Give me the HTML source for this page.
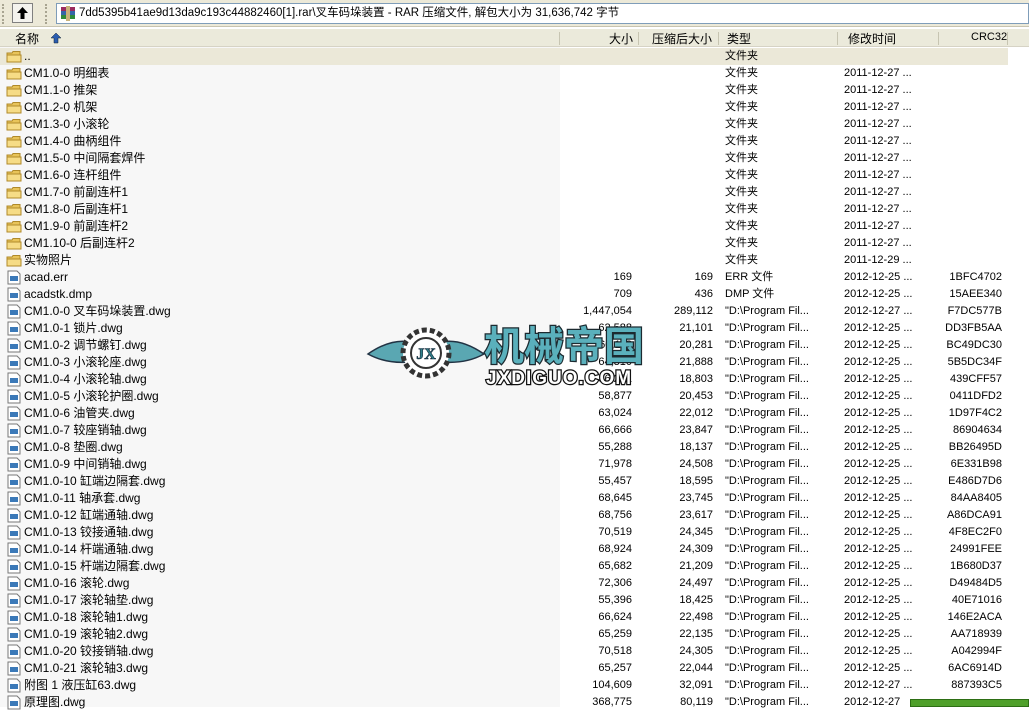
<!DOCTYPE html>
<html><head><meta charset="utf-8"><style>
*{margin:0;padding:0;box-sizing:border-box}
body{width:1029px;height:707px;overflow:hidden;background:#fff;position:relative;font:12px "Liberation Sans","WenQuanYi Zen Hei","Noto Sans CJK SC",sans-serif;color:#000}
#tb{position:absolute;left:0;top:0;width:1029px;height:27px;background:#ece9d8;border-bottom:1px solid #c8c4b0}
.grip{position:absolute;top:4px;width:2px;height:20px;border-left:2px dotted #a8a491}
#up{position:absolute;left:12px;top:3px;width:21px;height:20px;border:1px solid #808080;background:#f4f3ee}
#addr{position:absolute;left:56px;top:3px;width:973px;height:21px;background:#fff;border:1px solid #7f9db9;padding-left:22px;line-height:19px;white-space:nowrap;font-size:11.5px}
#hd{position:absolute;left:0;top:29px;width:1029px;height:18px;background:#ebeadb;border-bottom:1px solid #d6d3c5}
#hd span{position:absolute;top:1px;white-space:nowrap}
.sep{position:absolute;top:3px;width:1px;height:13px;background:#c7c5b2}
#namecol{position:absolute;left:0;top:47px;width:560px;height:660px;background:#f7f7f7}
#sel{position:absolute;left:0;top:48px;width:1008px;height:17px;background:#ebe8d8}
.r{position:absolute;left:0;height:17px;width:1008px;line-height:17px;white-space:nowrap}
.r span{position:absolute;top:0}
.n{left:24px}.s{right:376px;font-size:11px}.p{right:295px;font-size:11px}.t{left:725px;font-size:11px}.d{left:844px;font-size:11px}.c{right:6px;font-size:11px}
.ic{position:absolute;left:6px;top:1px;width:16px;height:15px}
</style></head><body>
<div id="tb">
<div class="grip" style="left:2px"></div>
<div id="up"><svg width="19" height="18"><path d="M9.5 3 L4 9 H7.5 V15 H11.5 V9 H15 Z" fill="#000"/></svg></div>
<div class="grip" style="left:45px"></div>
<div id="addr"><svg style="position:absolute;left:2px;top:1px" width="18" height="17"><rect x="2" y="2" width="14" height="4" fill="#9a2b5e"/><rect x="2" y="6" width="14" height="4" fill="#3466a8"/><rect x="2" y="10" width="14" height="4" fill="#2f8a3a"/><rect x="7" y="1" width="4" height="15" fill="#c9b27a"/></svg>7dd5395b41ae9d13da9c193c44882460[1].rar\叉车码垛装置 - RAR 压缩文件, 解包大小为 31,636,742 字节</div>
</div>
<div id="hd">
<span style="left:15px">名称</span><svg style="position:absolute;left:50px;top:3px" width="12" height="12"><path d="M6 1 L1 6 H4 V11 H8 V6 H11 Z" fill="#2a5db0" stroke="#123" stroke-width=".5"/></svg>
<div class="sep" style="left:559px"></div>
<span style="left:609px">大小</span><div class="sep" style="left:638px"></div>
<span style="left:652px">压缩后大小</span><div class="sep" style="left:718px"></div>
<span style="left:727px">类型</span><div class="sep" style="left:837px"></div>
<span style="left:848px">修改时间</span><div class="sep" style="left:938px"></div>
<span style="left:971px;font-size:11px;top:2px">CRC32</span><div class="sep" style="left:1007px"></div>
</div>
<div id="namecol"></div>
<div id="sel"></div>
<svg width="0" height="0" style="position:absolute"><defs>
<g id="f"><path d="M1 4 H6 L7 2.5 H14 V13 H1 Z" fill="#e8c45a" stroke="#b08a2a"/><path d="M1 6 H15 V13 H1Z" fill="#f6dc86" stroke="#b08a2a"/></g>
<g id="w"><path d="M2 1 H11 L14 4 V14 H2 Z" fill="#fff" stroke="#777"/><rect x="4" y="6" width="8" height="5" fill="#3b79b8"/></g>
</defs></svg>
<div class="r" style="top:48px"><svg class="ic"><use href="#f"/></svg><span class="n">..</span><span class="t">文件夹</span></div>
<div class="r" style="top:65px"><svg class="ic"><use href="#f"/></svg><span class="n">CM1.0-0 明细表</span><span class="t">文件夹</span><span class="d">2011-12-27 ...</span></div>
<div class="r" style="top:82px"><svg class="ic"><use href="#f"/></svg><span class="n">CM1.1-0 推架</span><span class="t">文件夹</span><span class="d">2011-12-27 ...</span></div>
<div class="r" style="top:99px"><svg class="ic"><use href="#f"/></svg><span class="n">CM1.2-0 机架</span><span class="t">文件夹</span><span class="d">2011-12-27 ...</span></div>
<div class="r" style="top:116px"><svg class="ic"><use href="#f"/></svg><span class="n">CM1.3-0 小滚轮</span><span class="t">文件夹</span><span class="d">2011-12-27 ...</span></div>
<div class="r" style="top:133px"><svg class="ic"><use href="#f"/></svg><span class="n">CM1.4-0 曲柄组件</span><span class="t">文件夹</span><span class="d">2011-12-27 ...</span></div>
<div class="r" style="top:150px"><svg class="ic"><use href="#f"/></svg><span class="n">CM1.5-0 中间隔套焊件</span><span class="t">文件夹</span><span class="d">2011-12-27 ...</span></div>
<div class="r" style="top:167px"><svg class="ic"><use href="#f"/></svg><span class="n">CM1.6-0 连杆组件</span><span class="t">文件夹</span><span class="d">2011-12-27 ...</span></div>
<div class="r" style="top:184px"><svg class="ic"><use href="#f"/></svg><span class="n">CM1.7-0 前副连杆1</span><span class="t">文件夹</span><span class="d">2011-12-27 ...</span></div>
<div class="r" style="top:201px"><svg class="ic"><use href="#f"/></svg><span class="n">CM1.8-0 后副连杆1</span><span class="t">文件夹</span><span class="d">2011-12-27 ...</span></div>
<div class="r" style="top:218px"><svg class="ic"><use href="#f"/></svg><span class="n">CM1.9-0 前副连杆2</span><span class="t">文件夹</span><span class="d">2011-12-27 ...</span></div>
<div class="r" style="top:235px"><svg class="ic"><use href="#f"/></svg><span class="n">CM1.10-0 后副连杆2</span><span class="t">文件夹</span><span class="d">2011-12-27 ...</span></div>
<div class="r" style="top:252px"><svg class="ic"><use href="#f"/></svg><span class="n">实物照片</span><span class="t">文件夹</span><span class="d">2011-12-29 ...</span></div>
<div class="r" style="top:269px"><svg class="ic"><use href="#w"/></svg><span class="n">acad.err</span><span class="s">169</span><span class="p">169</span><span class="t">ERR 文件</span><span class="d">2012-12-25 ...</span><span class="c">1BFC4702</span></div>
<div class="r" style="top:286px"><svg class="ic"><use href="#w"/></svg><span class="n">acadstk.dmp</span><span class="s">709</span><span class="p">436</span><span class="t">DMP 文件</span><span class="d">2012-12-25 ...</span><span class="c">15AEE340</span></div>
<div class="r" style="top:303px"><svg class="ic"><use href="#w"/></svg><span class="n">CM1.0-0 叉车码垛装置.dwg</span><span class="s">1,447,054</span><span class="p">289,112</span><span class="t">"D:\Program Fil...</span><span class="d">2012-12-27 ...</span><span class="c">F7DC577B</span></div>
<div class="r" style="top:320px"><svg class="ic"><use href="#w"/></svg><span class="n">CM1.0-1 锁片.dwg</span><span class="s">62,588</span><span class="p">21,101</span><span class="t">"D:\Program Fil...</span><span class="d">2012-12-25 ...</span><span class="c">DD3FB5AA</span></div>
<div class="r" style="top:337px"><svg class="ic"><use href="#w"/></svg><span class="n">CM1.0-2 调节螺钉.dwg</span><span class="s">60,112</span><span class="p">20,281</span><span class="t">"D:\Program Fil...</span><span class="d">2012-12-25 ...</span><span class="c">BC49DC30</span></div>
<div class="r" style="top:354px"><svg class="ic"><use href="#w"/></svg><span class="n">CM1.0-3 小滚轮座.dwg</span><span class="s">64,310</span><span class="p">21,888</span><span class="t">"D:\Program Fil...</span><span class="d">2012-12-25 ...</span><span class="c">5B5DC34F</span></div>
<div class="r" style="top:371px"><svg class="ic"><use href="#w"/></svg><span class="n">CM1.0-4 小滚轮轴.dwg</span><span class="s">56,231</span><span class="p">18,803</span><span class="t">"D:\Program Fil...</span><span class="d">2012-12-25 ...</span><span class="c">439CFF57</span></div>
<div class="r" style="top:388px"><svg class="ic"><use href="#w"/></svg><span class="n">CM1.0-5 小滚轮护圈.dwg</span><span class="s">58,877</span><span class="p">20,453</span><span class="t">"D:\Program Fil...</span><span class="d">2012-12-25 ...</span><span class="c">0411DFD2</span></div>
<div class="r" style="top:405px"><svg class="ic"><use href="#w"/></svg><span class="n">CM1.0-6 油管夹.dwg</span><span class="s">63,024</span><span class="p">22,012</span><span class="t">"D:\Program Fil...</span><span class="d">2012-12-25 ...</span><span class="c">1D97F4C2</span></div>
<div class="r" style="top:422px"><svg class="ic"><use href="#w"/></svg><span class="n">CM1.0-7 较座销轴.dwg</span><span class="s">66,666</span><span class="p">23,847</span><span class="t">"D:\Program Fil...</span><span class="d">2012-12-25 ...</span><span class="c">86904634</span></div>
<div class="r" style="top:439px"><svg class="ic"><use href="#w"/></svg><span class="n">CM1.0-8 垫圈.dwg</span><span class="s">55,288</span><span class="p">18,137</span><span class="t">"D:\Program Fil...</span><span class="d">2012-12-25 ...</span><span class="c">BB26495D</span></div>
<div class="r" style="top:456px"><svg class="ic"><use href="#w"/></svg><span class="n">CM1.0-9 中间销轴.dwg</span><span class="s">71,978</span><span class="p">24,508</span><span class="t">"D:\Program Fil...</span><span class="d">2012-12-25 ...</span><span class="c">6E331B98</span></div>
<div class="r" style="top:473px"><svg class="ic"><use href="#w"/></svg><span class="n">CM1.0-10 缸端边隔套.dwg</span><span class="s">55,457</span><span class="p">18,595</span><span class="t">"D:\Program Fil...</span><span class="d">2012-12-25 ...</span><span class="c">E486D7D6</span></div>
<div class="r" style="top:490px"><svg class="ic"><use href="#w"/></svg><span class="n">CM1.0-11 轴承套.dwg</span><span class="s">68,645</span><span class="p">23,745</span><span class="t">"D:\Program Fil...</span><span class="d">2012-12-25 ...</span><span class="c">84AA8405</span></div>
<div class="r" style="top:507px"><svg class="ic"><use href="#w"/></svg><span class="n">CM1.0-12 缸端通轴.dwg</span><span class="s">68,756</span><span class="p">23,617</span><span class="t">"D:\Program Fil...</span><span class="d">2012-12-25 ...</span><span class="c">A86DCA91</span></div>
<div class="r" style="top:524px"><svg class="ic"><use href="#w"/></svg><span class="n">CM1.0-13 铰接通轴.dwg</span><span class="s">70,519</span><span class="p">24,345</span><span class="t">"D:\Program Fil...</span><span class="d">2012-12-25 ...</span><span class="c">4F8EC2F0</span></div>
<div class="r" style="top:541px"><svg class="ic"><use href="#w"/></svg><span class="n">CM1.0-14 杆端通轴.dwg</span><span class="s">68,924</span><span class="p">24,309</span><span class="t">"D:\Program Fil...</span><span class="d">2012-12-25 ...</span><span class="c">24991FEE</span></div>
<div class="r" style="top:558px"><svg class="ic"><use href="#w"/></svg><span class="n">CM1.0-15 杆端边隔套.dwg</span><span class="s">65,682</span><span class="p">21,209</span><span class="t">"D:\Program Fil...</span><span class="d">2012-12-25 ...</span><span class="c">1B680D37</span></div>
<div class="r" style="top:575px"><svg class="ic"><use href="#w"/></svg><span class="n">CM1.0-16 滚轮.dwg</span><span class="s">72,306</span><span class="p">24,497</span><span class="t">"D:\Program Fil...</span><span class="d">2012-12-25 ...</span><span class="c">D49484D5</span></div>
<div class="r" style="top:592px"><svg class="ic"><use href="#w"/></svg><span class="n">CM1.0-17 滚轮轴垫.dwg</span><span class="s">55,396</span><span class="p">18,425</span><span class="t">"D:\Program Fil...</span><span class="d">2012-12-25 ...</span><span class="c">40E71016</span></div>
<div class="r" style="top:609px"><svg class="ic"><use href="#w"/></svg><span class="n">CM1.0-18 滚轮轴1.dwg</span><span class="s">66,624</span><span class="p">22,498</span><span class="t">"D:\Program Fil...</span><span class="d">2012-12-25 ...</span><span class="c">146E2ACA</span></div>
<div class="r" style="top:626px"><svg class="ic"><use href="#w"/></svg><span class="n">CM1.0-19 滚轮轴2.dwg</span><span class="s">65,259</span><span class="p">22,135</span><span class="t">"D:\Program Fil...</span><span class="d">2012-12-25 ...</span><span class="c">AA718939</span></div>
<div class="r" style="top:643px"><svg class="ic"><use href="#w"/></svg><span class="n">CM1.0-20 铰接销轴.dwg</span><span class="s">70,518</span><span class="p">24,305</span><span class="t">"D:\Program Fil...</span><span class="d">2012-12-25 ...</span><span class="c">A042994F</span></div>
<div class="r" style="top:660px"><svg class="ic"><use href="#w"/></svg><span class="n">CM1.0-21 滚轮轴3.dwg</span><span class="s">65,257</span><span class="p">22,044</span><span class="t">"D:\Program Fil...</span><span class="d">2012-12-25 ...</span><span class="c">6AC6914D</span></div>
<div class="r" style="top:677px"><svg class="ic"><use href="#w"/></svg><span class="n">附图 1 液压缸63.dwg</span><span class="s">104,609</span><span class="p">32,091</span><span class="t">"D:\Program Fil...</span><span class="d">2012-12-27 ...</span><span class="c">887393C5</span></div>
<div class="r" style="top:694px"><svg class="ic"><use href="#w"/></svg><span class="n">原理图.dwg</span><span class="s">368,775</span><span class="p">80,119</span><span class="t">"D:\Program Fil...</span><span class="d">2012-12-27</span></div>
<div style="position:absolute;left:910px;top:699px;width:119px;height:8px;background:#4fa02a;border:1px solid #2d6e14"></div>
<svg style="position:absolute;left:366px;top:318px" width="296" height="70">
<path d="M2 36 Q25 20 45 24 L44 44 Q20 46 2 36Z" fill="#5aa7b2" stroke="#234" stroke-width="1.5"/>
<path d="M118 36 Q95 20 75 24 L76 44 Q100 46 118 36Z" fill="#5aa7b2" stroke="#234" stroke-width="1.5"/>
<circle cx="60" cy="35" r="23" fill="#fff" stroke="#333" stroke-width="5" stroke-dasharray="5 3"/>
<circle cx="60" cy="35" r="15" fill="#fff" stroke="#333" stroke-width="2"/>
<text x="60" y="41" text-anchor="middle" font-family="Liberation Serif" font-weight="bold" font-size="16" fill="#2f7f8a" stroke="#123" stroke-width=".6">JX</text>
<text x="118" y="42" font-family="WenQuanYi Zen Hei,Noto Sans CJK SC" font-weight="bold" font-size="40" fill="#5ab0bc" stroke="#1c2a30" stroke-width="2.5" paint-order="stroke">机械帝国</text>
<text x="120" y="66" font-family="Liberation Sans" font-weight="bold" font-size="19" letter-spacing="1" fill="#fff" stroke="#111" stroke-width="2.5" paint-order="stroke">JXDIGUO.COM</text>
</svg>
</body></html>
